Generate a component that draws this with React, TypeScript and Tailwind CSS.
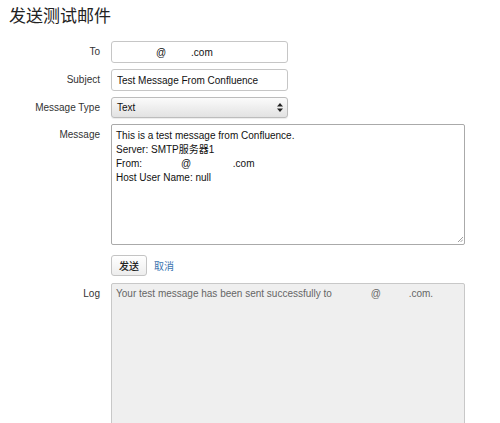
import React from "react";

const sans = "font-['Liberation_Sans','Noto_Sans_CJK_SC',sans-serif]";

export default function App() {
  const to = "              @         .com";
  const message =
    "This is a test message from Confluence.\nServer: SMTP服务器1\nFrom:              @               .com\nHost User Name: null";

  return (
    <div className={`${sans} bg-white w-[500px] h-[423px] overflow-hidden text-[#333]`}>
      <h1 className="pl-[9px] pt-[5px] text-[17px] leading-[20px] font-normal font-['Noto_Sans_CJK_SC',sans-serif] text-[#222]">
        发送测试邮件
      </h1>

      <div className="mt-[16px] grid grid-cols-[100px_354px] gap-x-[11px] gap-y-[6px] text-[10px]">
        <label className="text-right text-[10px] leading-[22px]">To</label>
        <input
          readOnly
          value={to}
          className="w-[177px] h-[22px] px-[5px] border border-[#c6c6c6] rounded-[3px] bg-white text-[10px] text-[#111] outline-none"
        />

        <label className="text-right text-[10px] leading-[22px]">Subject</label>
        <input
          readOnly
          value="Test Message From Confluence"
          className="w-[177px] h-[22px] px-[5px] border border-[#c6c6c6] rounded-[3px] bg-white text-[10px] text-[#111] outline-none"
        />

        <label className="text-right text-[10px] leading-[21px]">Message Type</label>
        <div className="relative w-[177px] h-[21px] border border-[#bcbcbc] rounded-[3px] bg-gradient-to-b from-[#fbfbfb] to-[#e2e2e2] shadow-[0_1px_1px_rgba(0,0,0,0.08)]">
          <span className="absolute left-[5px] top-0 leading-[19px] text-[10px] text-[#111]">Text</span>
          <svg className="absolute right-[4px] top-[5px]" width="6" height="9" viewBox="0 0 6 9">
            <path d="M0 3.5 L3 0 L6 3.5 Z" fill="#222" />
            <path d="M0 5.5 L3 9 L6 5.5 Z" fill="#222" />
          </svg>
        </div>

        <label className="text-right text-[10px] leading-[14px] pt-[4px]">Message</label>
        <div className="relative w-[354px] h-[121px]">
          <textarea
            readOnly
            value={message}
            className="w-full h-full resize-none px-[4px] pt-[4px] border border-[#aaa] rounded-[2px] text-[10px] leading-[14px] text-[#111] outline-none whitespace-pre"
          />
          <svg className="absolute right-[2px] bottom-[3px]" width="6" height="6" viewBox="0 0 6 6">
            <path d="M1 6 L6 1 M3.5 6 L6 3.5" stroke="#888" strokeWidth="0.8" />
          </svg>
        </div>

        <div />
        <div className="flex items-center gap-[7px] mt-[4px]">
          <button className="h-[21px] w-[36px] border border-[#c4c4c4] rounded-[3px] bg-gradient-to-b from-white to-[#ededed] text-[10px] font-['Noto_Sans_CJK_SC',sans-serif] text-[#222] font-medium">
            发送
          </button>
          <a className="text-[10px] text-[#3b73af] font-['Noto_Sans_CJK_SC',sans-serif] cursor-pointer">取消</a>
        </div>

        <label className="text-right text-[10px] leading-[14px] pt-[5px]">Log</label>
        <div className="mt-[1px] w-[354px] h-[160px] border border-[#c8c8c8] rounded-[2px] bg-[#efefef] px-[4px] pt-[3px] text-[10px] leading-[14px] text-[#666] whitespace-pre">
          {"Your test message has been sent successfully to              @          .com."}
        </div>
      </div>
    </div>
  );
}
